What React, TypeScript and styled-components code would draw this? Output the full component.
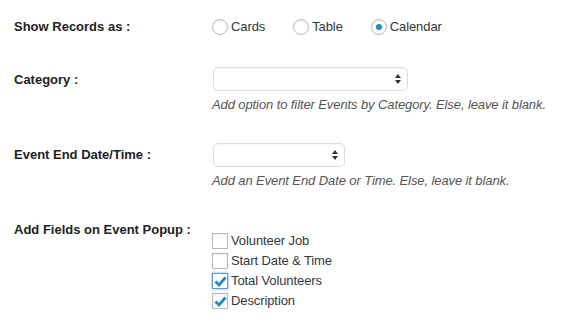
import styled, { createGlobalStyle } from "styled-components";

const GlobalStyle = createGlobalStyle`
  body {
    margin: 0;
    background: #ffffff;
    font-family: "Liberation Sans", Arial, Helvetica, sans-serif;
    font-size: 13px;
    color: #333;
  }
`

const Form = styled.div`
  padding: 18px 0 0 14px;
  display: flex;
  flex-direction: column;
`

const Row = styled.div<{ $top?: number }>`
  display: flex;
  align-items: flex-start;
  margin-top: ${(p) => p.$top || 0}px;
`

const Label = styled.div<{ $pad?: number }>`
  width: 198px;
  flex-shrink: 0;
  font-weight: 700;
  font-size: 13px;
  line-height: 18px;
  color: #222;
  padding-top: ${(p) => p.$pad || 0}px;
`

const Field = styled.div<{ $pad?: number }>`
  display: flex;
  flex-direction: column;
  padding-top: ${(p) => p.$pad || 0}px;
  letter-spacing: -0.1px;
`

const RadioGroup = styled.div`
  display: flex;
  align-items: center;
  height: 18px;
  letter-spacing: -0.1px;
`

const RadioLabel = styled.label`
  display: flex;
  align-items: center;
  margin-right: 28px;
  line-height: 18px;
  color: #32373c;
`

const RadioDot = styled.span<{ $checked?: boolean }>`
  width: 16px;
  height: 16px;
  box-sizing: border-box;
  border-radius: 50%;
  border: 1px solid #b4b9be;
  background: #fff;
  box-shadow: inset 0 1px 2px rgba(0, 0, 0, 0.07);
  margin-right: 3px;
  display: flex;
  align-items: center;
  justify-content: center;

  &::after {
    content: "";
    display: ${(p) => (p.$checked ? "block" : "none")};
    width: 6px;
    height: 6px;
    border-radius: 50%;
    background: #1e8cbe;
  }
`

const SelectWrap = styled.div<{ $w: number }>`
  position: relative;
  width: ${(p) => p.$w}px;
  height: 24px;
  box-sizing: border-box;
  margin-left: 1px;
  border: 1px solid #ddd;
  border-radius: 5px;
  background: #fff;
  box-shadow: inset 0 1px 2px rgba(0, 0, 0, 0.04);
`

const Arrows = styled.svg`
  position: absolute;
  right: 6px;
  top: 6px;
`

const Description = styled.p`
  margin: 5px 0 0;
  font-style: italic;
  line-height: 18px;
  color: #555;
`

const CheckList = styled.div`
  display: flex;
  flex-direction: column;
`

const CheckLabel = styled.label`
  display: flex;
  align-items: center;
  height: 20px;
  line-height: 18px;
  color: #32373c;
`

const Box = styled.span<{ $focus?: boolean }>`
  width: 16px;
  height: 16px;
  box-sizing: border-box;
  border: 1px solid ${(p) => (p.$focus ? "#5b9dd9" : "#b4b9be")};
  background: #fff;
  box-shadow: ${(p) =>
    p.$focus ? "0 0 2px rgba(30, 140, 190, 0.8)" : "inset 0 1px 2px rgba(0, 0, 0, 0.07)"};
  margin-right: 3px;
  display: flex;
  align-items: center;
  justify-content: center;
`

function Radio({ label, checked }: { label: string; checked?: boolean }) {
  return (
    <RadioLabel>
      <RadioDot $checked={checked} />
      {label}
    </RadioLabel>
  )
}

function Select({ width }: { width: number }) {
  return (
    <SelectWrap $w={width}>
      <Arrows width="6" height="10" viewBox="0 0 6 10">
        <path d="M3 0 L6 4 L0 4 Z" fill="#333" />
        <path d="M0 6 L6 6 L3 10 Z" fill="#333" />
      </Arrows>
    </SelectWrap>
  )
}

function Check({ label, checked, focus }: { label: string; checked?: boolean; focus?: boolean }) {
  return (
    <CheckLabel>
      <Box $focus={focus}>
        {checked && (
          <svg width="13" height="11" viewBox="0 0 13 11">
            <path d="M1.5 5.5 L5 9 L11.5 1.5" stroke="#1e8cbe" strokeWidth="2.8" fill="none" />
          </svg>
        )}
      </Box>
      {label}
    </CheckLabel>
  )
}

export default function App() {
  return (
    <>
      <GlobalStyle />
      <Form>
        <Row>
          <Label>Show Records as :</Label>
          <RadioGroup>
            <Radio label="Cards" />
            <Radio label="Table" />
            <Radio label="Calendar" checked />
          </RadioGroup>
        </Row>

        <Row $top={31}>
          <Label $pad={4}>Category :</Label>
          <Field>
            <Select width={195} />
            <Description>Add option to filter Events by Category. Else, leave it blank.</Description>
          </Field>
        </Row>

        <Row $top={29}>
          <Label $pad={3}>Event End Date/Time :</Label>
          <Field>
            <Select width={132} />
            <Description>Add an Event End Date or Time. Else, leave it blank.</Description>
          </Field>
        </Row>

        <Row $top={31}>
          <Label>Add Fields on Event Popup :</Label>
          <Field $pad={10}>
            <CheckList>
              <Check label="Volunteer Job" />
              <Check label="Start Date & Time" />
              <Check label="Total Volunteers" checked focus />
              <Check label="Description" checked />
            </CheckList>
          </Field>
        </Row>
      </Form>
    </>
  )
}
